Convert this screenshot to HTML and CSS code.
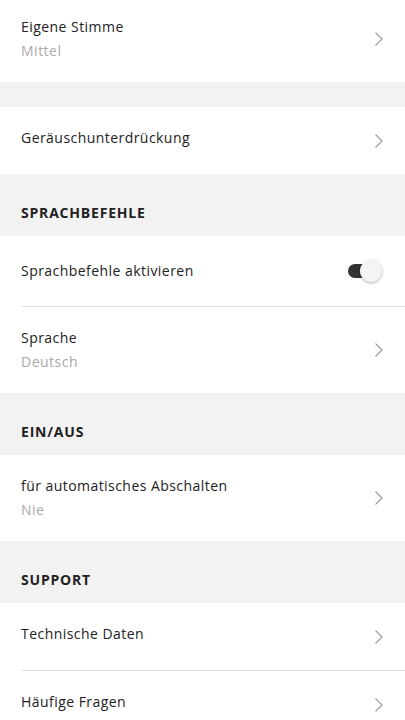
FILE: index.html
```html
<!DOCTYPE html>
<html>
<head>
    <meta charset="utf-8" />
    <meta name="viewport" content="width=device-width, initial-scale=1" />
    <title>Einstellungen</title>
    <link rel="stylesheet" href="styles.css">
</head>
<body>
    <div id="settings">
        <div class="group">
            <div class="row tall">
                <div class="label">
                    <div class="title">Eigene Stimme</div>
                    <div class="value">Mittel</div>
                </div>
                <svg class="chevron" viewBox="0 0 10 16"><path d="M1.5 1.5 L8 8 L1.5 14.5" /></svg>
            </div>
        </div>

        <div class="gap"></div>

        <div class="group">
            <div class="row">
                <div class="label">
                    <div class="title">Geräuschunterdrückung</div>
                </div>
                <svg class="chevron" viewBox="0 0 10 16"><path d="M1.5 1.5 L8 8 L1.5 14.5" /></svg>
            </div>
        </div>

        <div class="header">SPRACHBEFEHLE</div>

        <div class="group">
            <div class="row toggle-row">
                <div class="label">
                    <div class="title">Sprachbefehle aktivieren</div>
                </div>
                <div class="toggle on"><div class="knob"></div></div>
            </div>
            <div class="divider"></div>
            <div class="row tall">
                <div class="label">
                    <div class="title">Sprache</div>
                    <div class="value">Deutsch</div>
                </div>
                <svg class="chevron" viewBox="0 0 10 16"><path d="M1.5 1.5 L8 8 L1.5 14.5" /></svg>
            </div>
        </div>

        <div class="header">EIN/AUS</div>

        <div class="group">
            <div class="row tall">
                <div class="label">
                    <div class="title">für automatisches Abschalten</div>
                    <div class="value">Nie</div>
                </div>
                <svg class="chevron" viewBox="0 0 10 16"><path d="M1.5 1.5 L8 8 L1.5 14.5" /></svg>
            </div>
        </div>

        <div class="header">SUPPORT</div>

        <div class="group">
            <div class="row">
                <div class="label">
                    <div class="title">Technische Daten</div>
                </div>
                <svg class="chevron" viewBox="0 0 10 16"><path d="M1.5 1.5 L8 8 L1.5 14.5" /></svg>
            </div>
            <div class="divider"></div>
            <div class="row">
                <div class="label">
                    <div class="title">Häufige Fragen</div>
                </div>
                <svg class="chevron" viewBox="0 0 10 16"><path d="M1.5 1.5 L8 8 L1.5 14.5" /></svg>
            </div>
        </div>
    </div>
</body>
</html>
```

FILE: styles.css
```css
html, body {
    margin: 0;
    height: 100%;
    width: 100%;
    overflow: hidden;
    background-color: #f2f2f2;
    font: 14px "Open Sans", sans-serif;
    color: #222;
}

#settings {
    margin-top: -4px;
}

.group {
    background-color: white;
}

.gap {
    height: 25px;
}

.row {
    height: 67px;
    display: flex;
    align-items: center;
    justify-content: space-between;
    padding: 0 21px;
}

.row .label {
    margin-bottom: 6px;
}

.row.tall {
    height: 86px;
}

.row.tall .label,
.toggle-row .label {
    margin-bottom: 0;
}

.toggle-row {
    height: 70px;
}

.label {
    display: flex;
    flex-direction: column;
    gap: 6px;
}

.title {
    line-height: 18px;
    letter-spacing: 0.45px;
}

.value {
    line-height: 18px;
    color: #aaa;
    letter-spacing: 0.5px;
}

.chevron {
    width: 10px;
    height: 16px;
    fill: none;
    stroke: #999;
    stroke-width: 1.1;
}

.divider {
    height: 1px;
    margin-left: 21px;
    background-color: #e2e2e2;
}

.header {
    height: 62px;
    box-sizing: border-box;
    display: flex;
    align-items: flex-end;
    padding: 0 21px 14px;
    font-weight: 700;
    letter-spacing: 0.8px;
}

.toggle {
    position: relative;
    width: 26px;
    height: 14px;
    margin-right: 10px;
    border-radius: 7px;
    background-color: #333;
}

.knob {
    position: absolute;
    top: -4px;
    right: -8px;
    width: 22px;
    height: 22px;
    border-radius: 50%;
    background-color: #f4f4f4;
    box-shadow: 0 1px 3px rgba(0, 0, 0, 0.3);
}
```
